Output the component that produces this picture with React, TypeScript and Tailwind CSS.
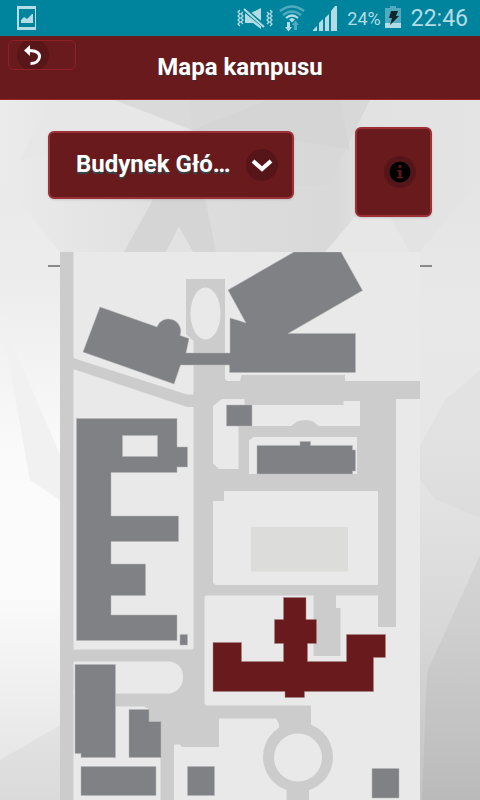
import React from "react";

function StatusBar() {
  return (
    <div className="flex h-9 items-center bg-[#00849d] pl-4 pr-3 text-[#b4dce4]">
      <svg className="h-6 w-5 shrink-0" viewBox="0 0 20 24" fill="currentColor" aria-hidden="true">
        <path fillRule="evenodd" d="M1 0h20v24H1zM3 3v18h16V3z" />
        <path d="M5 17v-3l3-3 3 2 5-5h1v9z" />
      </svg>
      <div className="ml-auto flex items-center">
        <svg className="h-7 w-9 shrink-0" viewBox="0 0 36 28" aria-hidden="true">
          <path
            d="M3 6l-2 2 2 2-2 2 2 2-2 2 2 2-2 2 2 2M6 8l-2 2 2 2-2 2 2 2-2 2 2 2M33 6l2 2-2 2 2 2-2 2 2 2-2 2 2 2-2 2M30 8l2 2-2 2 2 2-2 2 2 2-2 2"
            fill="none"
            stroke="currentColor"
            strokeWidth="1.3"
          />
          <path d="M8 9l16 13v3l-8-6H8zM14 9l10-5v13z" fill="currentColor" />
          <path d="M7 5l20 17" stroke="#00849d" strokeWidth="4" />
          <path d="M7 5l20 18" stroke="currentColor" strokeWidth="2" />
        </svg>
        <svg className="ml-1 h-7 w-7 shrink-0" viewBox="0 0 28 28" fill="none" aria-hidden="true">
          <path d="M3 7q12-9 24 0M6 11q9-7 18 0" stroke="#4fabbd" strokeWidth="2.4" />
          <path d="M9 14q6-5 12 0" stroke="currentColor" strokeWidth="2.2" />
          <path d="M12 15.500q3-3 6 0l-3 3z" fill="currentColor" />
          <path d="M10 18h3v5h2l-3.500 4.500L8 23h2z" fill="currentColor" />
          <path d="M17 26h3v-5h2l-3.500-4.500L15 21h2z" fill="#4fabbd" />
        </svg>
        <svg className="ml-2 h-7 w-6 shrink-0" viewBox="0 0 24 28" fill="currentColor" aria-hidden="true">
          <path d="M0 27v-1l4-4v5zM6 27v-8l4-4v12zM12 27V14l4-4v17zM18 27V7l4-5h2v25z" />
        </svg>
        <span className="ml-[10px] pt-0.5 text-[18px] leading-6">24%</span>
        <svg className="ml-1 h-6 w-4 shrink-0" viewBox="0 0 16 24" aria-hidden="true">
          <path d="M5 0h6v2h5v20H0V2h5z" fill="#4fabbd" />
          <path d="M0 17h16v5H0z" fill="currentColor" />
          <path d="M6 5h7l-2 5h3L5 19l2-7H4z" fill="#10262d" />
        </svg>
        <span className="ml-[10px] pt-0.5 text-[23px] leading-6">22:46</span>
      </div>
    </div>
  );
}

function Header() {
  return (
    <header className="grid h-16 grid-cols-[68px_1fr_68px] items-start border-b border-[#9a2229] bg-[#691a1d] px-2">
      <button
        type="button"
        aria-label="Wstecz"
        className="mt-1 flex h-[30px] items-center overflow-hidden rounded-md border border-[#8f2127] pl-2"
      >
        <span className="flex size-8 shrink-0 items-center justify-center rounded-full bg-[#591618]">
          <svg className="size-5" viewBox="0 0 20 20" aria-hidden="true">
            <path d="M1 5.500L7 0v11z" fill="#fff" />
            <path d="M6 5.500c8 0 11 3 10.500 6.500-.500 4-4 6.500-9 6.500" fill="none" stroke="#fff" strokeWidth="3" />
          </svg>
        </span>
      </button>
      <h1 className="pt-[15px] text-center text-[24px] leading-8 font-bold text-white [text-shadow:0_1px_0_#333]">
        Mapa kampusu
      </h1>
    </header>
  );
}

function Controls() {
  return (
    <div className="flex items-start justify-between">
      <div className="mt-1 grid h-[68px] w-[246px] items-center">
        <select
          aria-label="Budynek"
          className="col-start-1 row-start-1 h-full w-full appearance-none overflow-hidden rounded-md border-2 border-[#9c3036] bg-[#691a1d] pr-15 pb-0.5 pl-[26px] text-[24px] font-bold text-ellipsis whitespace-nowrap text-white shadow [text-shadow:0_2px_0_#33474a]"
        >
          <option>Budynek Główny</option>
        </select>
        <span className="pointer-events-none col-start-1 row-start-1 mr-4 flex size-8 items-center justify-center justify-self-end rounded-full bg-[#561518]">
          <svg className="size-6" viewBox="0 0 24 24" aria-hidden="true">
            <path d="M3 8l9 8 9-8" fill="none" stroke="#fff" strokeWidth="4.200" />
          </svg>
        </span>
      </div>
      <button
        type="button"
        aria-label="Informacje"
        className="flex h-[90px] w-[77px] items-center justify-end rounded-md border-2 border-[#9c3036] bg-[#691a1d] pr-[14px] shadow"
      >
        <span className="flex size-8 items-center justify-center rounded-full bg-[#561518]">
          <svg className="size-[22px]" viewBox="0 0 22 22" aria-hidden="true">
            <circle cx="11" cy="11" r="10.500" fill="#000" />
            <path d="M9.500 4h3v3h-3zM8 9h4.500v7H14v1.500H8V16h1.500v-5.500H8z" fill="#591618" />
          </svg>
        </span>
      </button>
    </div>
  );
}

function CampusMap() {
  return (
    <svg
      className="col-start-1 row-start-1 mx-3 block h-auto"
      viewBox="60 252 360 548"
      role="img"
      aria-label="Mapa kampusu"
    >
      <path d="M60 252h360v548H60z" fill="#e9e9e9" />
      <g fill="#ccc">
        <path d="M60 252h13.500v548H60z" />
        <path d="M73 358L187 394.500H200V407H187L73 369z" />
        <path d="M186 279H225V379L227 381H240L241.500 375H345V381H420V399H396V627H378V595.500H336V608H340.500V656H313.500V595.500H206L204.500 597V703L206 705.500H311V740H279V724L276 718.500H219V747H182L180 744.500H174V800H60V649.500H192L193.500 648V341L186 334z" />
        <circle cx="298" cy="757" r="35" />
        <path d="M286.500 788h22.500v12h-22.500z" />
      </g>
      <g fill="#e9e9e9">
        <circle cx="298" cy="757.500" r="24" />
        <ellipse cx="205.500" cy="313.500" rx="15" ry="26" />
        <path d="M222 399H244.500V405H343.500V401H360V426H318.500L313 421.500Q305 418.500 297 421.500L291 426H238.500V469H219L213 463.500V406z" />
        <path d="M249 474V440L250.500 439.500L253 437H357V474z" />
        <path d="M224 491H378V585H216L213 583V501H224z" />
        <path d="M73.500 661.500H170Q183 664 183 677T170 693.500H73.500z" />
        <path d="M73.500 690H116V706.500H144L149 709V721H160.500V800H73.500z" />
      </g>
      <path d="M251 527h97v44.500h-97z" fill="#dcdcda" />
      <g fill="#808184" stroke="#b5b5b7" strokeWidth=".5">
        <path d="M100 307L157 327A12 12 0 0 1 180 335.500L189 338.500L186 353H230V318L240 321L246 323L228 290L294 252H341L362.500 290.500L288 333.500H355.500V372.500H229.500V365H180.500L174 384L83 352z" />
        <path d="M226.500 405h25.500v21h-25.500z" />
        <path d="M257 445.500H300V441.500H310.500V445.500H352.500V450H355.500V471H352.500V474H257z" />
        <path
          fillRule="evenodd"
          d="M76.500 418.500H177V447H187.500V467H177V472.500H111V516H178.500V541.500H111V564H145.500V595.500H111V615H177V640.500H76.500zM122.500 435.500V456.500H157.500V435.500z"
        />
        <path d="M180 634.500h7.500v10.500h-7.500z" />
        <path d="M75 664.500H115.500V757.500H81V753.500H75z" />
        <path d="M129 709.500H149V721.500H161V757.500H129z" />
        <path d="M81 766.500h75v29h-75z" />
        <path d="M187.500 766.500h27v29h-27z" />
        <path d="M372 768.500h27v29.500h-27z" />
      </g>
      <path
        d="M213 642.500H241.500V661.500H283.500V643.500H274.500V619.500H283.500V597.500H306V619.500H316.500V643.500H307.500V661.500H346.500V634.500H385.500V657.500H373.500V691.500H304.500V697.500H285V691.500H213z"
        fill="#691a1d"
        stroke="#a98485"
        strokeWidth=".5"
      />
    </svg>
  );
}

function Backdrop() {
  return (
    <svg
      className="col-start-1 row-start-1 h-full w-full"
      viewBox="0 100 480 700"
      preserveAspectRatio="xMidYMid slice"
      aria-hidden="true"
    >
      <defs>
        <linearGradient id="left" x1="0" y1="0" x2="0" y2="1">
          <stop offset="0" stopColor="#e8e8e8" />
          <stop offset=".25" stopColor="#ececec" />
          <stop offset=".5" stopColor="#fafafa" />
          <stop offset=".7" stopColor="#fbfbfb" />
          <stop offset=".88" stopColor="#ececec" />
          <stop offset="1" stopColor="#e2e2e2" />
        </linearGradient>
        <linearGradient id="right" x1="0" y1="0" x2="0" y2="1">
          <stop offset="0" stopColor="#e2e2e2" />
          <stop offset=".3" stopColor="#e8e8e8" />
          <stop offset=".5" stopColor="#e6e6e6" />
          <stop offset=".75" stopColor="#d8d8d8" />
          <stop offset="1" stopColor="#c2c2c2" />
        </linearGradient>
        <linearGradient id="top" x1="0" y1="0" x2="1" y2="0">
          <stop offset="0" stopColor="#ebebeb" />
          <stop offset=".4" stopColor="#dddddd" />
          <stop offset=".7" stopColor="#d9d9d9" />
          <stop offset=".76" stopColor="#e2e2e2" />
          <stop offset="1" stopColor="#e4e4e4" />
        </linearGradient>
      </defs>
      <path d="M0 100h480v700H0z" fill="url(#left)" />
      <path d="M240 100h240v700H240z" fill="url(#right)" />
      <path d="M0 100H480V180L420 252H60L0 180z" fill="url(#top)" />
      <path d="M50 100H115L192 130L150 134L20 160z" fill="#e7e7e7" />
      <path d="M115 100H190L192 130z" fill="#dadada" />
      <path d="M190 100H370L345 150L330 185H200L192 130z" fill="#d8d8d8" />
      <path d="M192 130L268 100H340L350 150L294 140z" fill="#d5d5d5" />
      <path d="M154 198H205L216 252H193L179 227L166 252H124z" fill="#d5d5d5" />
      <path d="M179 227L193 252H166z" fill="#e2e2e2" />
      <path d="M355 217L325 252H410L390 217z" fill="#e7e7e7" />
      <path d="M0 315L60 455V500L30 480z" fill="#f1f1f1" />
      <path d="M0 760L60 725V800H0z" fill="#000" fillOpacity=".03" />
      <path d="M420 445L445 400L480 370V518L435 499L420 480z" fill="#000" fillOpacity=".02" />
      <path d="M480 555L427 672L480 683z" fill="#000" fillOpacity=".04" />
      <path d="M427 672L480 683V800H422z" fill="#000" fillOpacity=".04" />
    </svg>
  );
}

export default function App() {
  return (
    <div className="min-h-screen bg-[#e9e9e9] font-['Roboto',sans-serif]">
      <StatusBar />
      <Header />
      <div className="grid grid-cols-1 overflow-hidden">
        <Backdrop />
        <main className="col-start-1 row-start-1 px-12 pt-[27px]">
          <Controls />
          <div className="mt-[35px] grid grid-cols-1">
            <hr className="col-start-1 row-start-1 mt-[13px] self-start border-t-2 border-[#8a8a8a]" />
            <CampusMap />
          </div>
        </main>
      </div>
    </div>
  );
}
